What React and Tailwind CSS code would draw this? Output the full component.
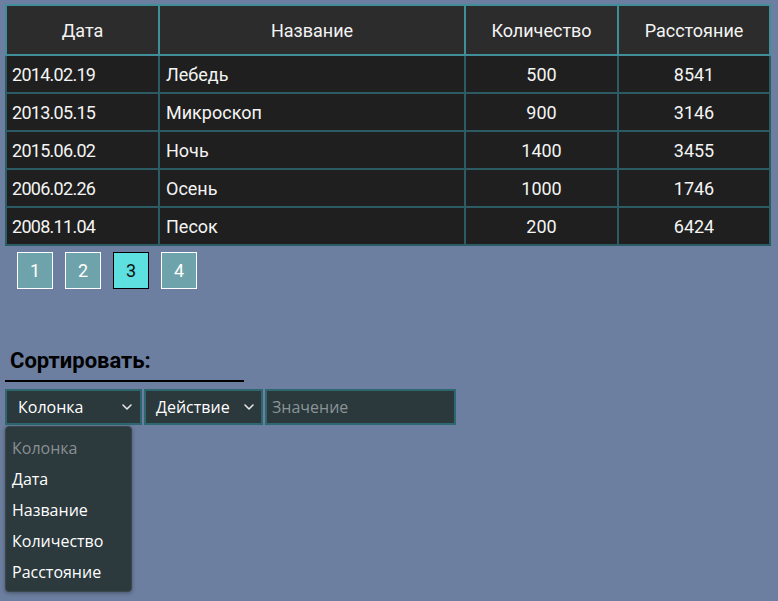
import React from "react";

const rows = [
  ["2014.02.19", "Лебедь", "500", "8541"],
  ["2013.05.15", "Микроскоп", "900", "3146"],
  ["2015.06.02", "Ночь", "1400", "3455"],
  ["2006.02.26", "Осень", "1000", "1746"],
  ["2008.11.04", "Песок", "200", "6424"],
];

const Chevron = () => (
  <svg width="12" height="8" viewBox="0 0 12 8" fill="none" stroke="#e6e6e6" strokeWidth="1.6" strokeLinecap="round" strokeLinejoin="round">
    <path d="M2 2 L6 6 L10 2" />
  </svg>
);

export default function App() {
  const tf = { fontFamily: "Roboto, 'Noto Sans', sans-serif" };
  const sf = { fontFamily: "'Open Sans', 'Noto Sans', sans-serif" };
  return (
    <div className="min-h-[601px] w-[778px] bg-[#6c7fa0] pt-[4px] pl-[5px]" style={tf}>
      <table className="w-[764px] border-collapse table-fixed text-[18px] text-[#f4f4f4]">
        <colgroup>
          <col className="w-[153px]" />
          <col className="w-[306px]" />
          <col className="w-[153px]" />
          <col className="w-[152px]" />
        </colgroup>
        <thead>
          <tr className="h-[50px] bg-[#2c2c2c]">
            {["Дата", "Название", "Количество", "Расстояние"].map((h) => (
              <th key={h} className="border-2 border-[#3f8e99] font-normal text-center">{h}</th>
            ))}
          </tr>
        </thead>
        <tbody>
          {rows.map((r) => (
            <tr key={r[0]} className="h-[38px] bg-[#1f1f1f]">
              <td className="border-2 border-[#2b5c64] pl-[5px] tracking-[-0.04em]">{r[0]}</td>
              <td className="border-2 border-[#2b5c64] pl-[6px]">{r[1]}</td>
              <td className="border-2 border-[#2b5c64] text-center">{r[2]}</td>
              <td className="border-2 border-[#2b5c64] text-center">{r[3]}</td>
            </tr>
          ))}
        </tbody>
      </table>

      <div className="mt-[6px] ml-[12px] flex gap-[12px] text-[18px]">
        {["1", "2", "3", "4"].map((n) => (
          <div
            key={n}
            className={
              n === "3"
                ? "w-[36px] h-[37px] flex items-center justify-center bg-[#5ee0e0] border border-black text-[#111]"
                : "w-[36px] h-[37px] flex items-center justify-center bg-[#6fa3ab] border border-white text-white"
            }
          >
            {n}
          </div>
        ))}
      </div>

      <div className="mt-[57px] w-[239px] border-b-2 border-black pl-[5px] pb-[5px] text-[22px] font-bold text-black leading-[29px]">
        Сортировать:
      </div>

      <div className="mt-[7px] flex gap-[2px] text-[16px]" style={sf}>
        <div className="relative">
          <div className="w-[137px] h-[36px] border-2 border-[#2d6870] bg-[#2b383c] flex items-center justify-between pl-[11px] pr-[7px] text-white">
            <span>Колонка</span>
            <Chevron />
          </div>
          <div className="absolute left-0 top-[37px] w-[127px] rounded-[4px] bg-[#2c393d] shadow-[0_1px_4px_rgba(0,0,0,0.35)] border border-[#3a484c] pt-[5px] pb-[4px] z-10">
            {["Колонка", "Дата", "Название", "Количество", "Расстояние"].map((o, i) => (
              <div key={o} className={"h-[31px] flex items-center pl-[6px] " + (i === 0 ? "text-[#8a9092]" : "text-white")}>
                {o}
              </div>
            ))}
          </div>
        </div>
        <div className="w-[119px] h-[36px] border-2 border-[#2d6870] bg-[#2b383c] flex items-center justify-between pl-[10px] pr-[6px] text-white">
          <span>Действие</span>
          <Chevron />
        </div>
        <div className="w-[191px] h-[36px] border-2 border-[#2d6870] bg-[#2b383c] flex items-center pl-[5px] text-[#8a9496]">
          Значение
        </div>
      </div>
    </div>
  );
}
